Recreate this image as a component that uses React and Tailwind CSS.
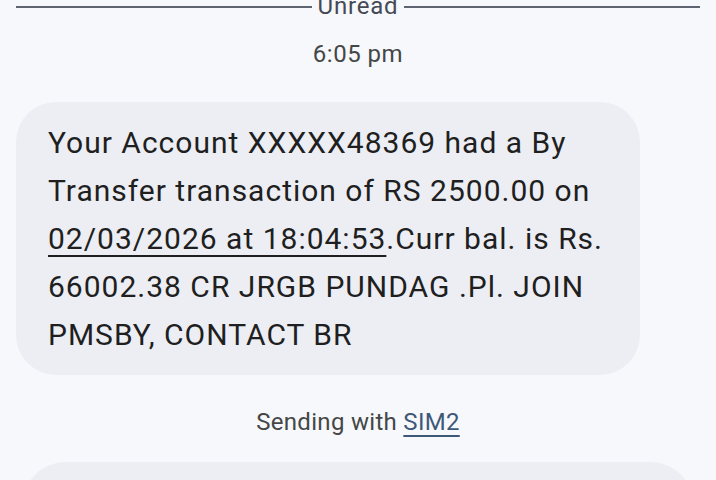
const App = () => {
  return (
    <div
      className="h-[480px] w-[716px] overflow-hidden bg-[#f7f8fc] text-[#1f1f1f]"
      style={{ fontFamily: "Roboto, 'Noto Sans', sans-serif" }}
    >
      {/* unread divider, cut off at the top */}
      <div className="-mt-[7px] flex h-[28px] items-center gap-[6px] px-[16px]">
        <div className="h-[2px] flex-1 bg-[#5f6570]"></div>
        <span className="-mt-[3px] text-[24px] leading-[28px] tracking-[0.8px] text-[#444a55]">Unread</span>
        <div className="h-[2px] flex-1 bg-[#5f6570]"></div>
      </div>

      <div className="mt-[19px] text-center text-[24px] leading-[28px] tracking-[0.5px] text-[#444746]">6:05 pm</div>

      <div className="ml-[16px] mt-[34px] w-[624px] rounded-[40px] bg-[#eceef4] pb-[16px] pl-[32px] pr-[16px] pt-[17px] text-[30px] leading-[48px] tracking-[1px]">
        Your Account XXXXX48369 had a By
        <br />
        Transfer transaction of RS 2500.00 on
        <br />
        <span className="underline decoration-[2px] underline-offset-[6px]">02/03/2026 at 18:04:53</span>.Curr bal. is Rs.
        <br />
        66002.38 CR JRGB PUNDAG .Pl. JOIN
        <br />
        PMSBY, CONTACT BR
      </div>

      <div className="mt-[33px] text-center text-[24px] leading-[28px] tracking-[0.3px] text-[#444746]">
        Sending with{" "}
        <span className="text-[#3e5878] underline decoration-[2px] underline-offset-[5px]">SIM2</span>
      </div>

      <div className="mx-[22px] mt-[26px] h-[80px] rounded-t-[44px] bg-[#eceef4]"></div>
    </div>
  );
};

export default App;
